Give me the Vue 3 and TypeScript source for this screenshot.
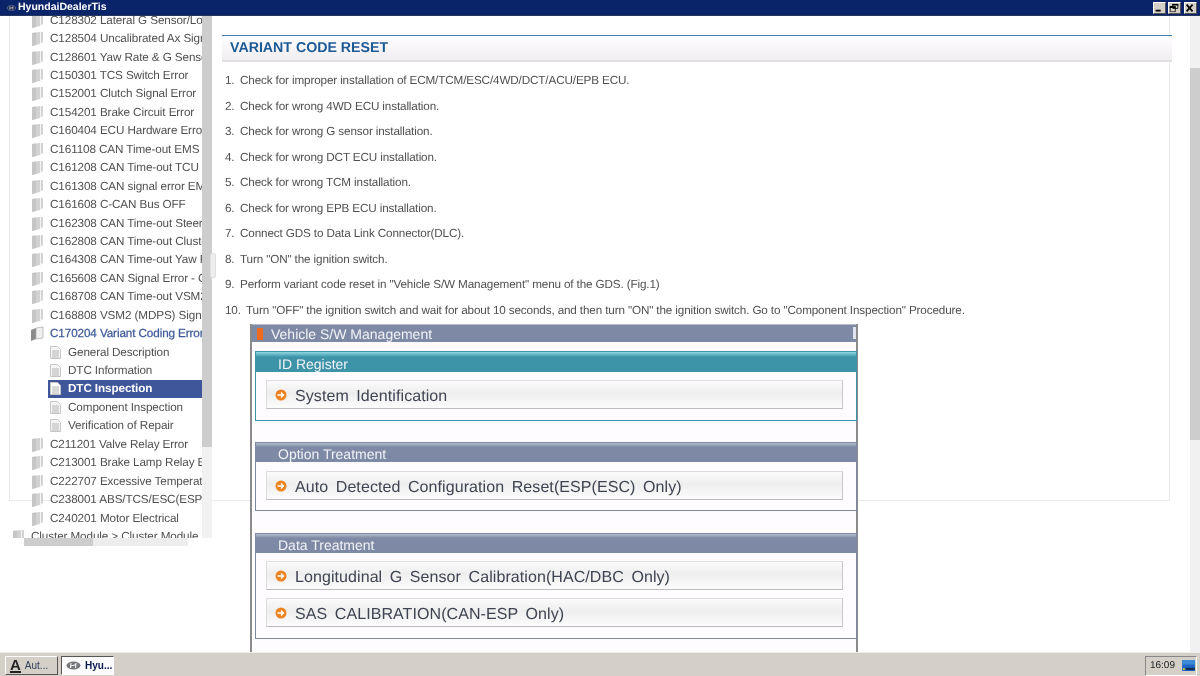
<script setup lang="ts">
interface TreeRow { label: string; kind: 'book' | 'open' | 'doc' | 'root'; selected?: boolean }
const bookLabels = [
  'C128302 Lateral G Sensor/Long', 'C128504 Uncalibrated Ax Signal', 'C128601 Yaw Rate & G Sensor',
  'C150301 TCS Switch Error', 'C152001 Clutch Signal Error', 'C154201 Brake Circuit Error',
  'C160404 ECU Hardware Error', 'C161108 CAN Time-out EMS', 'C161208 CAN Time-out TCU',
  'C161308 CAN signal error EMS', 'C161608 C-CAN Bus OFF', 'C162308 CAN Time-out Steering',
  'C162808 CAN Time-out Cluster', 'C164308 CAN Time-out Yaw Rate', 'C165608 CAN Signal Error - Ctrl',
  'C168708 CAN Time-out VSM2', 'C168808 VSM2 (MDPS) Signal'
]
const rows: TreeRow[] = [
  ...bookLabels.map((label): TreeRow => ({ label, kind: 'book' })),
  { label: 'C170204 Variant Coding Error', kind: 'open' },
  { label: 'General Description', kind: 'doc' },
  { label: 'DTC Information', kind: 'doc' },
  { label: 'DTC Inspection', kind: 'doc', selected: true },
  { label: 'Component Inspection', kind: 'doc' },
  { label: 'Verification of Repair', kind: 'doc' },
  { label: 'C211201 Valve Relay Error', kind: 'book' },
  { label: 'C213001 Brake Lamp Relay Error', kind: 'book' },
  { label: 'C222707 Excessive Temperature', kind: 'book' },
  { label: 'C238001 ABS/TCS/ESC(ESP) Error', kind: 'book' },
  { label: 'C240201 Motor Electrical', kind: 'book' },
  { label: 'Cluster Module > Cluster Module', kind: 'root' }
]
const steps = [
  'Check for improper installation of ECM/TCM/ESC/4WD/DCT/ACU/EPB ECU.',
  'Check for wrong 4WD ECU installation.',
  'Check for wrong G sensor installation.',
  'Check for wrong DCT ECU installation.',
  'Check for wrong TCM installation.',
  'Check for wrong EPB ECU installation.',
  'Connect GDS to Data Link Connector(DLC).',
  'Turn "ON" the ignition switch.',
  'Perform variant code reset in "Vehicle S/W Management" menu of the GDS. (Fig.1)',
  'Turn "OFF" the ignition switch and wait for about 10 seconds, and then turn "ON" the ignition switch. Go to "Component Inspection" Procedure.'
]
const groups = [
  { title: 'ID Register', teal: true, items: ['System Identification'] },
  { title: 'Option Treatment', teal: false, items: ['Auto Detected Configuration Reset(ESP(ESC) Only)'] },
  { title: 'Data Treatment', teal: false, items: ['Longitudinal G Sensor Calibration(HAC/DBC Only)', 'SAS CALIBRATION(CAN-ESP Only)'] }
]
</script>

<template>
  <div class="screen">
    <header class="titlebar">
      <svg class="logo" width="9" height="6" viewBox="0 0 15 9">
        <ellipse cx="7.5" cy="4.5" rx="7" ry="4" fill="#26304f" stroke="#9aa3b8" stroke-width=".7" />
        <path d="M5 2 4.5 7M10 2 9.5 7M5 5l5-1.4" stroke="#dfe3ee" stroke-width="1" fill="none" />
      </svg>
      <span class="app-name">HyundaiDealerTis</span>
      <div class="win-buttons">
        <button class="win-btn"><svg width="12" height="10" viewBox="0 0 12 10"><path d="M2 7h6v2H2z" fill="#000" /></svg></button>
        <button class="win-btn"><svg width="12" height="10" viewBox="0 0 12 10"><path d="M4.500.5h6v5h-6zM1.500 3.500h6v6h-6z" fill="#dcd9d1" stroke="#000" /><path d="M4 0h7v2H4zM1 3h7v2H1z" /></svg></button>
        <button class="win-btn close"><svg width="12" height="10" viewBox="0 0 12 10"><path d="M2 1l7 8M9 1l-7 8" stroke="#000" stroke-width="2" /></svg></button>
      </div>
    </header>

    <div class="workspace">
      <div class="frame"></div>
      <aside class="nav">
        <div class="tree-view">
          <ul class="tree">
            <li v-for="row in rows" :key="row.label" class="row" :class="['row-' + row.kind, { selected: row.selected }]">
              <svg v-if="row.kind === 'book' || row.kind === 'root'" class="icon" width="13" height="15" viewBox="0 0 13 15">
                <path d="M1 2 9 1v12l-8 2z" fill="#d2d2d2" />
                <path d="M1 2 5 1.500v12.500l-4 1z" fill="#c6c6c6" />
                <path d="M9 1h1.500v12H9z" fill="#f4f4f4" />
                <path d="M10.500 1h1v10.500h-1z" fill="#a9a9a9" />
              </svg>
              <svg v-else-if="row.kind === 'open'" class="icon" width="15" height="15" viewBox="0 0 15 15">
                <path d="M1 4 6 2v11l-5 2z" fill="#8b8b8b" />
                <path d="M6 2 13 1v11l-7 1z" fill="#efefef" stroke="#a9a9a9" stroke-width=".7" />
              </svg>
              <svg v-else class="icon" width="11" height="13" viewBox="0 0 11 13">
                <path d="M.5.500h7l3 3v9h-10z" :fill="row.selected ? '#fff' : '#f5f5f5'" stroke="#c6c6c6" />
                <path d="M2 5h7M2 7h7M2 9h7M2 11h7" stroke="#b4b4b4" />
              </svg>
              <span class="row-label">{{ row.label }}</span>
            </li>
          </ul>
          <div class="vscroll"><div class="vthumb"></div></div>
        </div>
        <div class="hscroll"><div class="hthumb"></div></div>
        <div class="grip"></div>
      </aside>

      <main class="content">
        <div class="heading"><h1>VARIANT CODE RESET</h1></div>
        <ol class="steps">
          <li v-for="(step, i) in steps" :key="i" :class="{ wide: i === 9 }">
            <span class="num">{{ i + 1 }}.</span><span>{{ step }}</span>
          </li>
        </ol>
        <figure class="figure">
          <div class="fig-title"><i class="flag"></i>Vehicle S/W Management<i class="corner"></i></div>
          <section v-for="g in groups" :key="g.title" class="group" :class="{ teal: g.teal }">
            <h2>{{ g.title }}</h2>
            <div class="group-body">
              <div v-for="item in g.items" :key="item" class="fig-item">
                <svg width="12" height="12" viewBox="0 0 12 12">
                  <circle cx="6" cy="6" r="5.500" fill="#ee8420" />
                  <path d="M2.500 6h6M6 3.500 8.500 6 6 8.500" stroke="#fff" stroke-width="1.300" fill="none" />
                </svg>
                <span class="item-text">{{ item }}</span>
              </div>
            </div>
          </section>
        </figure>
      </main>

      <div class="page-scroll"><div class="page-thumb"></div></div>
    </div>

    <footer class="taskbar">
      <button class="task">
        <span class="task-a">A</span><span>Aut...</span>
      </button>
      <button class="task active">
        <svg width="15" height="9" viewBox="0 0 15 9">
          <ellipse cx="7.500" cy="4.500" rx="7" ry="4" fill="#77787c" />
          <path d="M5 2 4.500 7M10 2 9.500 7M5 5l5-1.400" stroke="#fff" stroke-width="1" fill="none" />
        </svg>
        <span>Hyu...</span>
      </button>
      <div class="tray">
        <span>16:09</span>
        <svg width="13" height="11" viewBox="0 0 14 12">
          <rect width="14" height="12" fill="#1f66c4" />
          <rect width="14" height="5" fill="#3d89d8" />
          <rect x="4" y="8.500" width="10" height="2.500" fill="#123055" />
          <rect x="1" y="9" width="2" height="2" fill="#e8c33b" />
        </svg>
      </div>
    </footer>
  </div>
</template>

<style>
html, body { margin: 0; overflow: hidden; background: #fff; }
</style>

<style scoped>
.screen {
  width: 1200px;
  height: 676px;
  display: flex;
  flex-direction: column;
  overflow: hidden;
  font-family: "Liberation Sans", Arial, sans-serif;
  color: #444;
  background: #fff;
  text-rendering: geometricPrecision;
  filter: blur(.35px);
}
.titlebar {
  height: 16px;
  flex: none;
  display: flex;
  align-items: center;
  gap: 2px;
  padding-left: 7px;
  box-sizing: border-box;
  background: #0a246a;
  border-bottom: 1px solid #27365f;
}
.app-name { color: #fff; font-weight: 700; font-size: 10.500px; line-height: 15px; }
.win-buttons { margin-left: auto; display: flex; gap: 1.500px; padding-right: 3px; }
.win-btn {
  width: 13.500px;
  height: 12px;
  padding: 0;
  display: flex;
  align-items: center;
  justify-content: center;
  background: #d4d0c8;
  border: 1px solid;
  border-color: #fff #555 #555 #fff;
}
.win-btn svg { flex: none; transform: scale(.85); }
.close { margin-left: 1px; }
.workspace { flex: 1; min-height: 0; display: flex; position: relative; overflow: hidden; }
.frame {
  position: absolute;
  left: 9px;
  top: 0;
  width: 1159px;
  height: 484px;
  border: 1px solid #ebebeb;
  border-top: 0;
}
.nav { position: relative; width: 212px; flex: none; height: 530px; }
.tree-view { display: flex; height: 522px; overflow: hidden; }
.tree {
  list-style: none;
  width: 202px;
  flex: none;
  margin: -5px 0 0;
  padding: 0;
  overflow: hidden;
}
.row {
  height: 18.450px;
  display: flex;
  align-items: center;
  padding-left: 31px;
  gap: 6px;
  font-size: 11.700px;
  letter-spacing: -.1px;
  white-space: nowrap;
  position: relative;
  color: #505050;
}
.icon { flex: none; }
.row-open { color: #3e5a9a; -webkit-text-stroke: .25px #3e5a9a; gap: 5px; padding-left: 30px; }
.row-doc { padding-left: 50px; gap: 7px; }
.selected { margin-left: 48px; padding-left: 2px; background: #3f569b; color: #fff; font-weight: 700; }
.row-root { padding-left: 12px; gap: 6px; }
.vscroll { width: 10px; flex: none; background: #f1f1f1; }
.vthumb { height: 431px; background: #cdcdcd; }
.hscroll { height: 8px; margin: 0 24px; width: 164px; background: #ededed; }
.hthumb { width: 69px; height: 8px; background: #cdcdcd; }
.grip {
  position: absolute;
  left: 210px;
  top: 237px;
  width: 6px;
  height: 25px;
  background: #eee;
  border: 1px solid #e0e0e0;
  border-radius: 2px;
  box-sizing: border-box;
}
.content { flex: none; width: 978px; position: relative; padding-left: 10px; box-sizing: border-box; }
.heading {
  width: 950px;
  height: 24px;
  margin-top: 19px;
  border-top: 1px solid #3f7fb5;
  border-bottom: 2px solid #e0e0e0;
  background: linear-gradient(#fffdff, #f0eef0);
}
h1 {
  margin: 0;
  padding-left: 8px;
  font-size: 14.200px;
  line-height: 25px;
  font-weight: 700;
  color: #1c5a96;
}
.steps { list-style: none; margin: 6px 0 0; padding: 0 0 0 3px; }
.steps li {
  height: 25.550px;
  display: flex;
  font-size: 11.700px;
  letter-spacing: -.13px;
  line-height: 25.550px;
  white-space: nowrap;
  color: #505050;
}
.num { width: 15px; flex: none; }
.steps li.wide .num { width: 21px; }
.figure {
  position: relative;
  z-index: 1;
  width: 608px;
  margin: 1px 0 0 28px;
  background: #fffcff;
  border-left: 2px solid #8a8a8a;
  border-right: 2px solid #8a8a8a;
  box-sizing: border-box;
  height: 330px;
}
.fig-title {
  height: 18px;
  box-sizing: border-box;
  display: flex;
  align-items: center;
  background: #7e8aa5;
  border-top: 1px solid #b6bcc8;
  color: #f3f3f7;
  font-size: 14px;
  position: relative;
}
.flag { width: 6px; height: 12px; margin: 0 8px 0 5px; background: #ee6a20; }
.corner { position: absolute; right: 0; top: 2px; width: 3px; height: 12px; background: #dfe3ee; }
.group {
  margin: 9px 0 0 3px;
  width: 602px;
  box-sizing: border-box;
  border: 1px solid #7e8aa5;
  background: #fffcff;
}
.group:nth-of-type(2) { margin-top: 21px; }
.group:nth-of-type(3) { margin-top: 22px; }
.group:nth-of-type(2) .group-body { padding-top: 9px; padding-bottom: 10px; }
.group h2 {
  margin: 0;
  height: 19px;
  line-height: 15px;
  padding: 4px 0 0 22px;
  box-sizing: border-box;
  font-size: 14px;
  font-weight: 400;
  color: #f0f2f6;
  background: linear-gradient(#b6bdcc 0, #7e8aa5 4px);
}
.group.teal { border-color: #3d93a8; }
.group.teal h2 { height: 20px; padding-top: 5px; background: linear-gradient(#8fd8e4 0, #3d93a8 5px); }
.group-body { padding: 8px 13px 11px 10px; display: flex; flex-direction: column; gap: 8px; }
.fig-item {
  height: 29px;
  box-sizing: border-box;
  display: flex;
  align-items: center;
  gap: 8px;
  padding-left: 8px;
  padding-top: 1px;
  border: 1px solid #dcdcdc;
  border-bottom-color: #bcbcbc;
  border-right-color: #c8c8c8;
  background: linear-gradient(#fbfbfb, #eeeeee 45%, #fcfcfc);
  font-size: 16px;
  letter-spacing: .08px;
  word-spacing: 3px;
  color: #3f4452;
  white-space: nowrap;
}
.item-text { margin-top: 5px; margin-bottom: 0; line-height: 18px; transform: translateY(-1px); }
.page-scroll { width: 10px; flex: none; background: #f1f1f1; }
.page-thumb { height: 372px; margin-top: 52px; background: #cdcdcd; }
.taskbar {
  height: 24px;
  flex: none;
  display: flex;
  align-items: center;
  gap: 3px;
  padding: 2px 3px 0 5px;
  box-sizing: border-box;
  background: #d4d0c8;
  border-top: 1px solid #ededea;
  color: #33415e;
  font-size: 10px;
}
.task {
  width: 53px;
  height: 19px;
  padding: 0 0 0 4px;
  display: flex;
  align-items: center;
  gap: 4px;
  font: inherit;
  color: inherit;
  background: #d4d0c8;
  border: 1px solid;
  border-color: #fff #555 #555 #fff;
}
.task-a { font-weight: 700; font-size: 15px; line-height: 12px; color: #222; border-bottom: 2px solid #222; }
.task.active {
  background: #fbfbfb;
  border-color: #555 #fff #fff #555;
  color: #0a1a50;
  font-weight: 700;
}
.tray {
  margin-left: auto;
  width: 52px;
  height: 20px;
  display: flex;
  align-items: center;
  justify-content: flex-end;
  gap: 7px;
  padding-right: 1px;
  box-sizing: border-box;
  border: 1px solid;
  border-color: #888 #fff #fff #888;
  font-size: 10px;
  color: #222;
}
</style>
